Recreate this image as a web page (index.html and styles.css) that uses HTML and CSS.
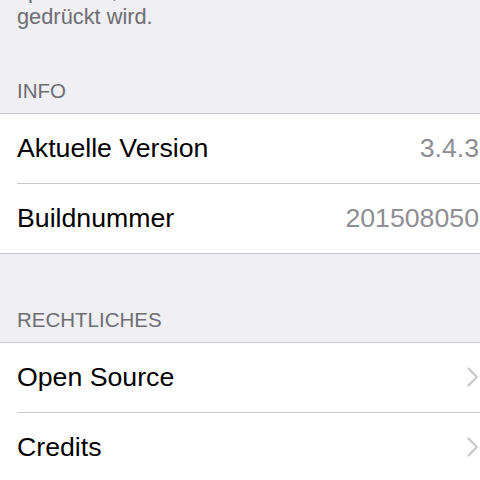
FILE: index.html
```html
<!DOCTYPE html>
<html lang="de">
<head>
<meta charset="utf-8">
<title>Info</title>
<link rel="stylesheet" href="styles.css">
</head>
<body>
<div class="footer">speichern, wenn die Home-Taste<br>gedrückt wird.</div>

<div class="section-header first">INFO</div>
<div class="group">
  <div class="row"><span class="label">Aktuelle Version</span><span class="value">3.4.3</span></div>
  <div class="row last"><span class="label">Buildnummer</span><span class="value">201508050</span></div>
</div>

<div class="section-header">RECHTLICHES</div>
<div class="group">
  <div class="row"><span class="label">Open Source</span><svg class="chevron" width="11" height="20" viewBox="0 0 11 20"><polyline points="1.5,1.5 9.8,10 1.5,18.5" fill="none" stroke="#c7c7cc" stroke-width="2.2" stroke-linecap="round" stroke-linejoin="round"/></svg></div>
  <div class="row last"><span class="label">Credits</span><svg class="chevron" width="11" height="20" viewBox="0 0 11 20"><polyline points="1.5,1.5 9.8,10 1.5,18.5" fill="none" stroke="#c7c7cc" stroke-width="2.2" stroke-linecap="round" stroke-linejoin="round"/></svg></div>
</div>
</body>
</html>
```
FILE: styles.css
```css
html, body {
  margin: 0;
  padding: 0;
  background: #efeff4;
  font-family: "Liberation Sans", Arial, sans-serif;
  overflow: hidden;
}

.footer {
  margin-top: -22px;
  padding: 0 17px;
  font-size: 21.8px;
  line-height: 26px;
  color: #6d6d72;
}

.section-header {
  padding: 54px 17px 10px;
  font-size: 20.5px;
  line-height: 24px;
  color: #6d6d72;
}

.section-header.first {
  padding-top: 48.5px;
}

.group {
  background: #ffffff;
  border-top: 1px solid #c8c7cc;
  border-bottom: 1px solid #c8c7cc;
}

.row {
  display: flex;
  align-items: center;
  justify-content: space-between;
  height: 69px;
  margin-left: 17px;
  padding-right: 1px;
  border-bottom: 1px solid #c8c7cc;
  font-size: 26.7px;
  line-height: 69px;
  color: #000000;
}

.row.last {
  border-bottom: none;
}

.value {
  color: #8e8e93;
}

.chevron {
  display: block;
  margin-right: 1px;
}
```
